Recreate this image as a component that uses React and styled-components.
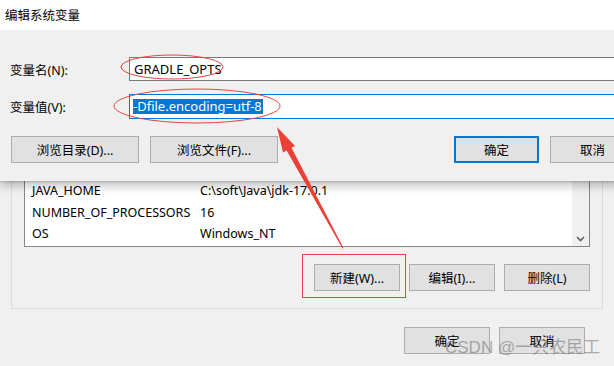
import React from "react";
import styled, { createGlobalStyle } from "styled-components";

const GlobalStyle = createGlobalStyle`
  html, body {
    margin: 0;
    padding: 0;
    background: #f0f0f0;
    overflow: hidden;
  }
  * {
    box-sizing: border-box;
  }
`;

const FONT = `"Noto Sans", "Noto Sans CJK SC", sans-serif`;

const Screen = styled.div`
  position: relative;
  width: 614px;
  height: 366px;
  overflow: hidden;
  background: #f0f0f0;
  font-family: ${FONT};
  font-size: 12px;
  color: #000;
`;

// window underneath
const BackWindow = styled.div`
  display: flex;
  flex-direction: column;
  padding: 0 11px 0 11px;
  height: 100%;
`;

const GroupBox = styled.div`
  margin-top: 170px;
  height: 139px;
  border: 1px solid #dcdcdc;
  border-top: none;
  padding: 0 12px 0 12px;
  display: flex;
  flex-direction: column;
`;

const ListBox = styled.div`
  height: 77px;
  background: #fff;
  border: 1px solid #828790;
  border-top: none;
  display: flex;
`;

const ListRows = styled.div`
  flex: 1;
  padding-top: 10px;
  display: flex;
  flex-direction: column;
`;

const ListRow = styled.div`
  height: 21.5px;
  display: grid;
  grid-template-columns: 168px 1fr;
  align-items: center;
  padding-left: 7px;
  white-space: nowrap;
  font-size: 12.5px;
`;

const ScrollBar = styled.div`
  width: 17px;
  background: #f0f0f0;
  display: flex;
  flex-direction: column;
  justify-content: flex-end;
  align-items: center;
  padding-bottom: 4px;
  color: #606060;
`;

const ButtonRow = styled.div`
  display: flex;
  justify-content: flex-end;
  gap: ${(p) => p.gap || 9}px;
  padding: ${(p) => p.pad || "0"};
`;

const Button = styled.div`
  width: ${(p) => p.w || 86}px;
  height: 27px;
  flex-shrink: 0;
  display: flex;
  align-items: center;
  justify-content: center;
  background: #e1e1e1;
  border: ${(p) => (p.primary ? "2px solid #0078d7" : "1px solid #adadad")};
  font-size: 12.5px;
  white-space: nowrap;
`;

const Footer = styled.div`
  display: flex;
  justify-content: flex-end;
  gap: 9px;
  padding: 18px 18px 0 0;
`;

// dialog on top
const Dialog = styled.div`
  position: absolute;
  left: 0;
  top: 0;
  width: 660px;
  height: 181px;
  background: #f0f0f0;
  display: flex;
  flex-direction: column;
  box-shadow: 0 4px 10px rgba(0, 0, 0, 0.28), 0 1px 2px rgba(0, 0, 0, 0.15);
`;

const TitleBar = styled.div`
  height: 30px;
  background: #fff;
  display: flex;
  align-items: center;
  padding: 0 0 2px 5px;
  font-size: 12.5px;
`;

const Body = styled.div`
  flex: 1;
  display: flex;
  flex-direction: column;
  padding: 27px 0 0 0;
`;

const FieldRow = styled.div`
  display: grid;
  grid-template-columns: 129px 1fr;
  align-items: center;
  margin-bottom: ${(p) => p.mb || 0}px;
`;

const Label = styled.div`
  padding-left: 10px;
  font-size: 12.5px;
`;

const Input = styled.div`
  height: ${(p) => p.h || 24}px;
  background: #fff;
  border: 1px solid ${(p) => (p.focus ? "#0078d7" : "#7a7a7a")};
  display: flex;
  align-items: center;
  padding-left: ${(p) => (p.focus ? 3 : 4)}px;
  font-size: 13px;
`;

const Selected = styled.span`
  background: #0078d7;
  color: #fff;
  line-height: 15px;
  padding: 0 1px 0 0;
`;

const DialogButtons = styled.div`
  display: flex;
  align-items: center;
  padding: 17px 25px 0 11px;
  gap: 11px;
`;

const Spacer = styled.div`
  flex: 1;
`;

const Overlay = styled.svg`
  position: absolute;
  left: 0;
  top: 0;
  pointer-events: none;
`;

const Watermark = styled.div`
  position: absolute;
  left: 445px;
  top: 333px;
  font-family: "Liberation Sans", "Noto Sans CJK SC", sans-serif;
  font-size: 17px;
  color: rgba(120, 120, 120, 0.6);
  white-space: nowrap;
`;

const rows = [
  ["JAVA_HOME", "C:\\soft\\Java\\jdk-17.0.1"],
  ["NUMBER_OF_PROCESSORS", "16"],
  ["OS", "Windows_NT"],
];

export default function App() {
  return (
    <Screen>
      <GlobalStyle />
      <BackWindow>
        <GroupBox>
          <ListBox>
            <ListRows>
              {rows.map(([k, v]) => (
                <ListRow key={k}>
                  <span>{k}</span>
                  <span>{v}</span>
                </ListRow>
              ))}
            </ListRows>
            <ScrollBar>
              <svg width="9" height="6" viewBox="0 0 9 6">
                <path d="M1 1 L4.5 4.5 L8 1" fill="none" stroke="#606060" strokeWidth="1.6" />
              </svg>
            </ScrollBar>
          </ListBox>
          <ButtonRow gap={9} pad="17px 0 0 0">
            <Button>新建(W)...</Button>
            <Button>编辑(I)...</Button>
            <Button>删除(L)</Button>
          </ButtonRow>
        </GroupBox>
        <Footer>
          <Button>确定</Button>
          <Button>取消</Button>
        </Footer>
      </BackWindow>

      <Dialog>
        <TitleBar>编辑系统变量</TitleBar>
        <Body>
          <FieldRow mb={13}>
            <Label>变量名(N):</Label>
            <Input>GRADLE_OPTS</Input>
          </FieldRow>
          <FieldRow>
            <Label>变量值(V):</Label>
            <Input focus h={25}>
              <Selected>-Dfile.encoding=utf-8</Selected>
            </Input>
          </FieldRow>
          <DialogButtons>
            <Button w={128}>浏览目录(D)...</Button>
            <Button w={128}>浏览文件(F)...</Button>
            <Spacer />
            <Button w={85} primary>确定</Button>
            <Button w={85}>取消</Button>
          </DialogButtons>
        </Body>
      </Dialog>

      <Overlay width="614" height="366" viewBox="0 0 614 366">
        <ellipse cx="172" cy="67" rx="51" ry="12" fill="none" stroke="#e8453c" strokeWidth="1" />
        <ellipse cx="197" cy="106" rx="83" ry="17" fill="none" stroke="#e8453c" strokeWidth="1" />
        <rect x="302.5" y="254.5" width="103" height="43" fill="none" stroke="#e8453c" strokeWidth="1" />
        <polygon
          points="277,127 295,146 291.5,147.8 343.5,248 342.5,248.4 286.6,150.5 283,152.5"
          fill="#ec3f36"
        />
      </Overlay>
      <Watermark>CSDN @一只农民工</Watermark>
    </Screen>
  );
}
